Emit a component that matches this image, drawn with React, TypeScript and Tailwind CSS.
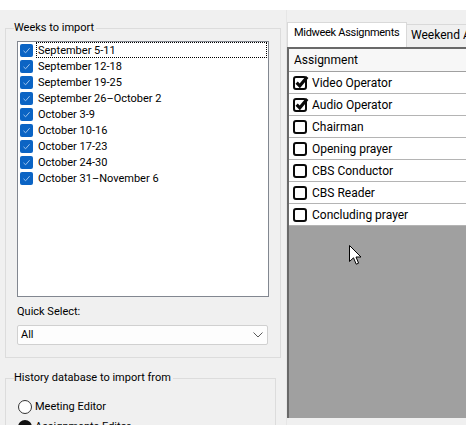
import { useState } from "react";

const weeks = [
    "September 5-11",
    "September 12-18",
    "September 19-25",
    "September 26–October 2",
    "October 3-9",
    "October 10-16",
    "October 17-23",
    "October 24-30",
    "October 31–November 6",
];

const assignments = [
    { name: "Video Operator", checked: true },
    { name: "Audio Operator", checked: true },
    { name: "Chairman", checked: false },
    { name: "Opening prayer", checked: false },
    { name: "CBS Conductor", checked: false },
    { name: "CBS Reader", checked: false },
    { name: "Concluding prayer", checked: false },
];

function BlueCheck() {
    return (
        <span className="w-[13px] h-[13px] shrink-0 rounded-[2px] bg-[#0b64c4] flex items-center justify-center">
            <svg width="9" height="9" viewBox="0 0 9 9">
                <path d="M1.5 4.8 L3.6 6.8 L7.6 2.2" fill="none" stroke="#9cc3ee" strokeWidth="1" />
            </svg>
        </span>
    );
}

function GridCheck({ checked }: { checked: boolean }) {
    return (
        <span className="relative w-[14px] h-[14px] shrink-0 rounded-[3px] border-2 border-[#0a0a0a] bg-white">
            {checked && (
                <svg className="absolute -left-[1px] -top-[4px]" width="16" height="16" viewBox="0 0 16 16">
                    <path d="M2.6 8.6 L5.8 11.8 L13.2 3" fill="none" stroke="#0a0a0a" strokeWidth="3.2" />
                </svg>
            )}
        </span>
    );
}

function Radio({ checked, label }: { checked: boolean; label: string }) {
    return (
        <div className="flex items-center h-[20px]">
            <span
                className={`w-[14px] h-[14px] rounded-full flex items-center justify-center ${
                    checked ? "bg-[#111]" : "border border-[#333] bg-white"
                }`}>
                {checked && <span className="w-[5px] h-[5px] rounded-full bg-white" />}
            </span>
            <span className="ml-[3px]">{label}</span>
        </div>
    );
}

export default function App() {
    const [sel] = useState(0);

    return (
        <div
            className="relative w-[466px] h-[425px] overflow-hidden bg-[#f0f0f0] text-[11px] text-black"
            style={{ fontFamily: "Roboto, 'Liberation Sans', sans-serif" }}>
            {/* strip of the window header, cut off */}
            <div className="h-[10px] bg-white overflow-hidden">
                <div className="-mt-[11px] ml-[0px] leading-[12px] text-[11px]">Import history</div>
            </div>

            <div className="flex">
                {/* left side */}
                <div className="pl-[5px] w-[276px] shrink-0">
                    <fieldset className="mt-[10px] border border-[#dcdcdc] px-[11px] pt-[5px] pb-[12px]">
                        <legend className="ml-[-3px] pl-[0px] pr-[2px] leading-[16px]">Weeks to import</legend>
                        <div className="w-[252px] h-[256px] border border-[#828790] bg-white">
                            {weeks.map((w, i) => (
                                <div key={w} className="flex items-center h-[16px] pl-[2px]">
                                    <BlueCheck />
                                    <span
                                        className={`ml-[3px] flex-1 h-[16px] leading-[15px] pl-[1px] mr-[1px] ${
                                            i === sel ? "border border-dotted border-black" : "border border-transparent"
                                        }`}>
                                        {w}
                                    </span>
                                </div>
                            ))}
                        </div>

                        <div className="mt-[7px] leading-[16px]">Quick Select:</div>
                        <div className="mt-[5px] w-[251px] h-[20px] border border-[#d0d0d0] rounded-[2px] bg-[#fdfdfd] flex items-center justify-between pl-[3px] pr-[4px]">
                            <span>All</span>
                            <svg width="10" height="6" viewBox="0 0 10 6">
                                <path d="M0.5 0.5 L5 5 L9.5 0.5" fill="none" stroke="#5a5a5a" strokeWidth="1" />
                            </svg>
                        </div>
                    </fieldset>

                    <fieldset className="mt-[12px] border border-[#dcdcdc] px-[12px] pt-[11px] pb-[8px]">
                        <legend className="ml-[-4px] pr-[2px] leading-[16px]">History database to import from</legend>
                        <Radio checked={false} label="Meeting Editor" />
                        <Radio checked={true} label="Assignments Editor" />
                    </fieldset>
                </div>

                {/* right side */}
                <div className="ml-[10px] flex-1 border-l border-[#e6e6e6]">
                    <div className="flex items-end pt-[12px]">
                        <div className="h-[25px] w-[120px] bg-white border-l border-t border-r border-[#d9d9d9] pl-[6px] leading-[20px] tracking-[-0.3px]">
                            Midweek Assignments
                        </div>
                        <div className="h-[23px] flex-1 bg-[#f0f0f0] border-t border-r border-[#d9d9d9] pl-[4px] text-[12px] leading-[20px] whitespace-nowrap overflow-hidden">
                            Weekend Assignments
                        </div>
                    </div>

                    <div className="h-[371px] flex flex-col border-t-2 border-l-2 border-[#696969] text-[12px]">
                        <div className="h-[23px] shrink-0 bg-[#f7f7f7] border-b border-[#a0a0a0] pl-[5px] flex items-center">
                            Assignment
                        </div>
                        {assignments.map((a) => (
                            <div
                                key={a.name}
                                className="h-[22px] shrink-0 bg-white border-b border-[#b4b4b4] pl-[4px] flex items-center">
                                <GridCheck checked={a.checked} />
                                <span className="ml-[5px]">{a.name}</span>
                            </div>
                        ))}
                        <div className="flex-1 bg-[#a0a0a0]" />
                    </div>
                </div>
            </div>

            {/* mouse pointer */}
            <svg className="absolute left-[349px] top-[245px]" width="13" height="21" viewBox="0 0 13 21">
                <path
                    d="M0.5 0.5 L0.5 16.5 L4.5 12.8 L7.2 19.2 L9.6 18.2 L7 12 L12 12 Z"
                    fill="white"
                    stroke="black"
                    strokeWidth="1"
                    strokeLinejoin="round"
                />
            </svg>
        </div>
    );
}
